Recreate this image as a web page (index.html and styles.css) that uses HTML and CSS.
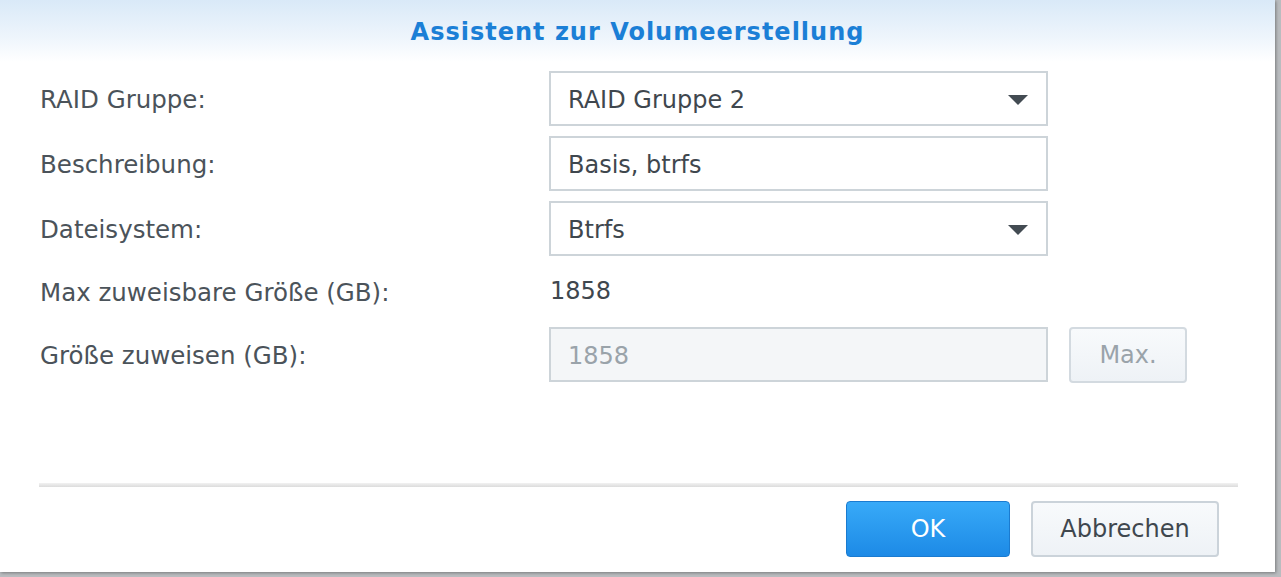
FILE: index.html
```html
<!DOCTYPE html>
<html lang="de">
<head>
<meta charset="utf-8">
<title>Assistent zur Volumeerstellung</title>
<link rel="stylesheet" href="styles.css">
</head>
<body>
<div class="dialog">
  <div class="title">Assistent zur Volumeerstellung</div>
  <div class="form">
    <div class="row">
      <div class="label">RAID Gruppe:</div>
      <div class="field select"><span>RAID Gruppe 2</span><span class="arrow"></span></div>
    </div>
    <div class="row">
      <div class="label">Beschreibung:</div>
      <div class="field"><span>Basis, btrfs</span></div>
    </div>
    <div class="row">
      <div class="label">Dateisystem:</div>
      <div class="field select"><span>Btrfs</span><span class="arrow"></span></div>
    </div>
    <div class="row text-row">
      <div class="label">Max zuweisbare Größe (GB):</div>
      <div class="value">1858</div>
    </div>
    <div class="row">
      <div class="label">Größe zuweisen (GB):</div>
      <div class="field disabled"><span>1858</span></div>
      <div class="btn btn-max">Max.</div>
    </div>
  </div>
  <div class="divider"></div>
  <div class="footer">
    <div class="btn btn-ok">OK</div>
    <div class="btn btn-cancel">Abbrechen</div>
  </div>
</div>
</body>
</html>
```
FILE: styles.css
```css
html, body {
  margin: 0;
  padding: 0;
  background: #b9bcbf;
  width: 1281px;
  height: 577px;
  overflow: hidden;
}
.dialog {
  width: 1275px;
  height: 572px;
  background: #ffffff;
  font-family: "DejaVu Sans", Verdana, sans-serif;
  color: #4b535a;
  box-shadow: 1px 1px 3px rgba(0,0,0,0.35);
  display: flex;
  flex-direction: column;
}
.title {
  height: 62px;
  box-sizing: border-box;
  padding-top: 18px;
  text-align: center;
  font-weight: bold;
  font-size: 24px;
  letter-spacing: 1px;
  color: #1b7fd6;
  background: linear-gradient(to bottom, #d9e9f8 0%, #eef5fc 60%, #ffffff 100%);
}
.form {
  padding: 9px 0 0 40px;
  display: flex;
  flex-direction: column;
  gap: 10px;
  height: 421px;
  box-sizing: border-box;
}
.row {
  display: flex;
  align-items: center;
  height: 55px;
}
.text-row {
  height: 54px;
  margin-top: -2px;
  margin-bottom: -1px;
}
.label {
  width: 509px;
  font-size: 24.5px;
  flex: none;
  padding-top: 2px;
}
.field {
  width: 499px;
  height: 55px;
  box-sizing: border-box;
  border: 2px solid #cdd4d9;
  display: flex;
  align-items: center;
  justify-content: space-between;
  padding: 2px 18px 0 17px;
  font-size: 24px;
  color: #3f474e;
  background: #fff;
}
.field.disabled {
  background: #f4f6f8;
  color: #9aa3aa;
}
.arrow {
  width: 0;
  height: 0;
  border-left: 10px solid transparent;
  border-right: 10px solid transparent;
  border-top: 10px solid #434b52;
}
.value {
  font-size: 24px;
  color: #3f474e;
  padding-left: 1px;
}
.btn {
  box-sizing: border-box;
  height: 56px;
  border-radius: 4px;
  display: flex;
  align-items: center;
  justify-content: center;
  font-size: 24px;
}
.btn-max {
  margin-left: 21px;
  width: 118px;
  border: 2px solid #d3dae0;
  background: linear-gradient(to bottom, #f8fafc, #eef2f6);
  color: #9aa3aa;
}
.divider {
  margin: 0 37px 0 39px;
  height: 4px;
  background: linear-gradient(to bottom, #f2f2f2, #dcdcdc);
}
.footer {
  display: flex;
  justify-content: flex-end;
  gap: 21px;
  padding: 14px 56px 0 0;
}
.btn-ok {
  width: 164px;
  border: 1px solid #1a7bd0;
  background: linear-gradient(to bottom, #38aaf8, #1d8ae6);
  color: #ffffff;
}
.btn-cancel {
  width: 188px;
  border: 2px solid #cbd3da;
  background: linear-gradient(to bottom, #f8fafc, #eef2f6);
  color: #3f474e;
}
```
